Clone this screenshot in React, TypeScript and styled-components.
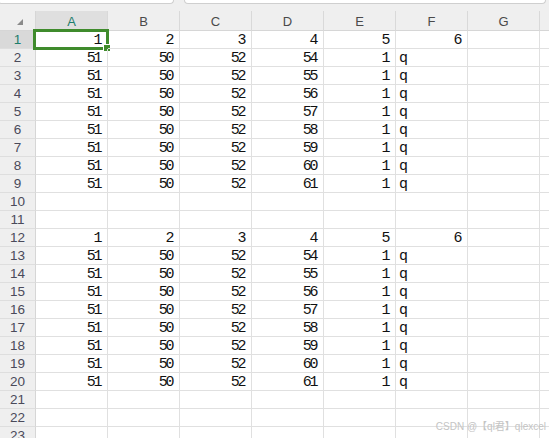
import React from "react";
import styled, { createGlobalStyle } from "styled-components";

const GlobalStyle = createGlobalStyle`
  html, body {
    margin: 0;
    padding: 0;
    background: #ffffff;
    overflow: hidden;
  }
  body {
    font-family: "Liberation Sans", Arial, sans-serif;
  }
`;

const columns = ["A", "B", "C", "D", "E", "F", "G", ""];

type Cell = string | number | null;

const headerRow: Cell[] = [1, 2, 3, 4, 5, 6, null, null];
const dataRow = (d: number): Cell[] => [51, 50, 52, d, 1, "q", null, null];
const emptyRow: Cell[] = [null, null, null, null, null, null, null, null];

const block: Cell[][] = [
  headerRow,
  ...[54, 55, 56, 57, 58, 59, 60, 61].map(dataRow),
];

const rows: Cell[][] = [...block, emptyRow, emptyRow, ...block, emptyRow, emptyRow, emptyRow];

const App = () => {
  return (
    <Page>
      <GlobalStyle />
      <TopStrip>
        <NameBox />
        <FormulaBox />
      </TopStrip>
      <Sheet>
        <Corner>
          <CornerMark />
        </Corner>
        {columns.map((c, i) => (
          <ColHeader key={"h" + i} active={i === 0}>
            {c}
          </ColHeader>
        ))}
        {rows.map((r, ri) => (
          <React.Fragment key={ri}>
            <RowHeader active={ri === 0}>{ri + 1}</RowHeader>
            {r.map((v, ci) => (
              <DataCell key={ci} align={typeof v === "string" ? "left" : "right"}>
                {v}
                {ri === 0 && ci === 0 && (
                  <Selection>
                    <FillHandle />
                  </Selection>
                )}
              </DataCell>
            ))}
          </React.Fragment>
        ))}
      </Sheet>
      <Watermark>CSDN @【ql君】qlexcel</Watermark>
    </Page>
  );
};

export default App;

const Page = styled.div`
  position: relative;
  width: 549px;
  height: 438px;
  overflow: hidden;
  background: #ffffff;
`;

const TopStrip = styled.div`
  display: flex;
  gap: 10px;
  height: 11px;
  background: #efefef;
`;

const NameBox = styled.div`
  width: 174px;
  height: 3px;
  margin-left: -2px;
  background: #ffffff;
  border: 1px solid #cfcfcf;
  border-top: none;
  border-radius: 0 0 6px 6px;
`;

const FormulaBox = styled.div`
  width: 360px;
  height: 3px;
  background: #ffffff;
  border: 1px solid #cfcfcf;
  border-top: none;
  border-radius: 0 0 6px 6px;
`;

const Sheet = styled.div`
  display: grid;
  grid-template-columns: 36px repeat(8, 72px);
  grid-auto-rows: 18px;
  grid-template-rows: 20px;
`;

const Corner = styled.div`
  background: #efefef;
  border-right: 1px solid #d6d6d6;
  border-bottom: 1px solid #d6d6d6;
  box-sizing: border-box;
  display: flex;
  align-items: center;
  justify-content: center;
`;

const CornerMark = styled.div`
  width: 0;
  height: 0;
  margin-left: 4px;
  margin-top: 2px;
  border-left: 6px solid transparent;
  border-bottom: 6px solid #8a8a8a;
`;

const ColHeader = styled.div<{ active: boolean }>`
  box-sizing: border-box;
  background: ${({ active }) => (active ? "#dfdfdf" : "#efefef")};
  border-right: 1px solid #d9d9d9;
  border-bottom: 1px solid #d6d6d6;
  color: ${({ active }) => (active ? "#1e7d6c" : "#4a4a4a")};
  font-size: 13px;
  display: flex;
  align-items: center;
  justify-content: center;
  padding-top: 1px;
`;

const RowHeader = styled.div<{ active: boolean }>`
  box-sizing: border-box;
  background: ${({ active }) => (active ? "#d9d9d9" : "#efefef")};
  border-right: 1px solid #d6d6d6;
  border-bottom: 1px solid #dedede;
  color: ${({ active }) => (active ? "#1e7d6c" : "#4a4a5a")};
  font-size: 13.5px;
  display: flex;
  align-items: center;
  justify-content: center;
`;

const DataCell = styled.div<{ align: "left" | "right" }>`
  position: relative;
  box-sizing: border-box;
  border-right: 1px solid #e0e0e0;
  border-bottom: 1px solid #e0e0e0;
  font-family: "Liberation Mono", "DejaVu Sans Mono", monospace;
  font-size: 15px;
  letter-spacing: -2.4px;
  color: #111111;
  text-align: ${({ align }) => align};
  padding: 0 ${({ align }) => (align === "right" ? "7px" : "0")} 0
    ${({ align }) => (align === "left" ? "3px" : "0")};
  line-height: 19px;
`;

const Selection = styled.div`
  position: absolute;
  left: -3px;
  top: -2px;
  right: -2px;
  bottom: -2px;
  border: 3px solid #3f8b2c;
  pointer-events: none;
`;

const FillHandle = styled.div`
  position: absolute;
  right: -5px;
  bottom: -5px;
  width: 6px;
  height: 6px;
  background: #3f8b2c;
  border: 1px solid #ffffff;
`;

const Watermark = styled.div`
  position: absolute;
  right: 3px;
  bottom: 5px;
  font-family: "Liberation Sans", "Noto Sans CJK SC", sans-serif;
  font-size: 10px;
  color: #c4c4c4;
`;
